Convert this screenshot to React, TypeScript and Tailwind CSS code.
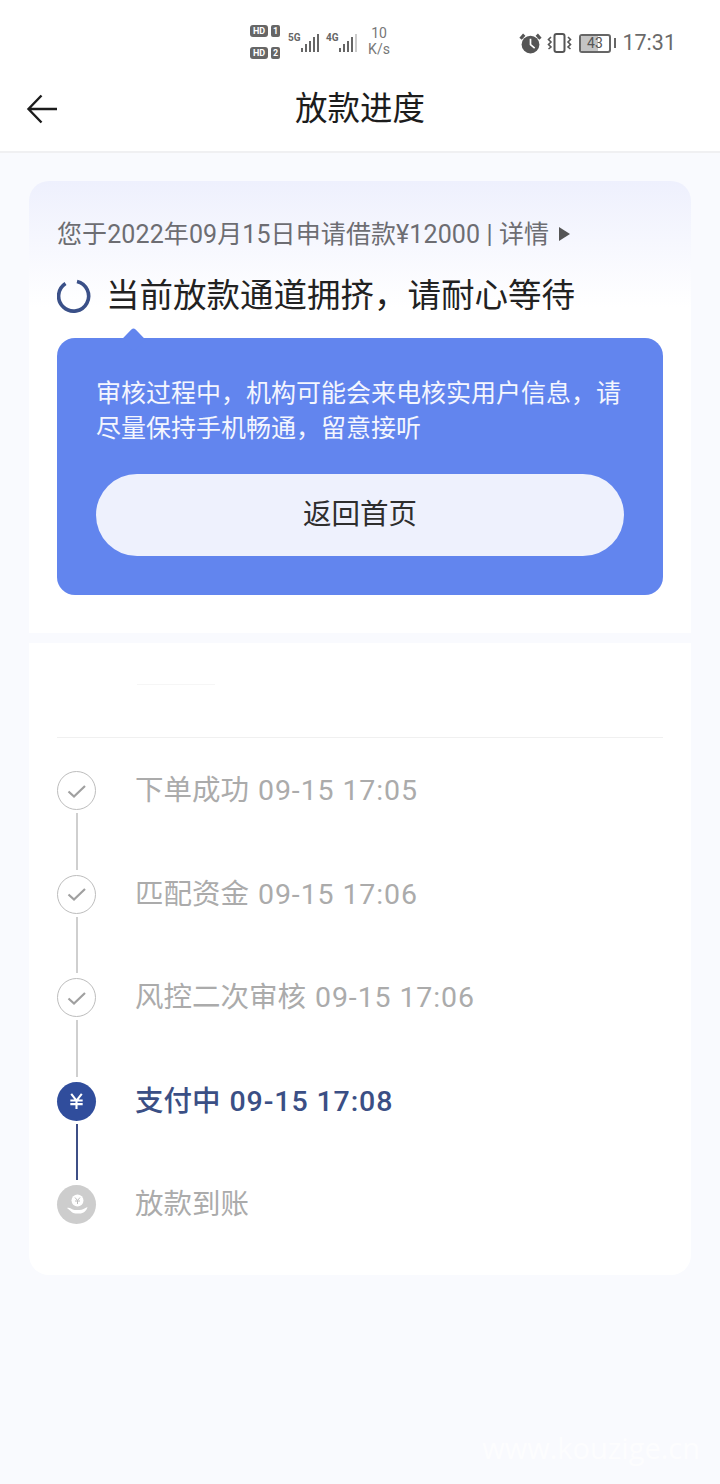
import React from 'react'

const font = { fontFamily: 'Roboto, "Noto Sans CJK SC", sans-serif' }

function StatusBar() {
    return (
        <div className="h-[76px] bg-white flex items-start text-[#5f5f5f]">
            <div className="ml-[250px] mt-[25px] flex items-start">
                <div className="flex flex-col gap-[10px] w-[30px]">
                    <SimTag n="1" />
                    <SimTag n="2" />
                </div>
                <Signal label="5G" className="ml-[8px]" dim={false} />
                <Signal label="4G" className="ml-[7px]" dim />
                <div className="ml-[11px] w-[22px] text-[14px] leading-[16px] text-center text-[#777]">10<br />K/s</div>
            </div>
            <div className="ml-auto mr-[44px] mt-[31px] flex items-center">
                <svg width="23" height="23" viewBox="0 0 22 22" className="mr-[5px]">
                    <circle cx="11" cy="12" r="8.500" fill="#555" />
                    <path d="M11 6.500V12l4 3.500" stroke="#fff" strokeWidth="1.600" fill="none" />
                    <path d="M1.500 6.500 5 2.500M20.500 6.500 17 2.500" stroke="#555" strokeWidth="3" />
                </svg>
                <svg width="25" height="24" viewBox="0 0 25 24" className="mr-[7px]" fill="none" stroke="#555">
                    <rect x="7.500" y="3" width="10" height="18" rx="2" strokeWidth="2" />
                    <path d="M4 6 1.500 8.500 4 11l-2.500 2.500L4 16l-2.500 2M21 6l2.500 2.500L21 11l2.500 2.500L21 16l2.500 2" strokeWidth="1.600" />
                </svg>
                <div className="relative w-[32px] h-[19px] rounded-[3px] border-2 border-[#666] overflow-hidden">
                    <div className="h-full w-[60%] bg-[#c4c4c4]" />
                    <div className="absolute inset-0 flex items-center justify-center text-[14px] leading-none text-[#555]">43</div>
                </div>
                <div className="ml-[3px] w-[2.500px] h-[10px] bg-[#666]" />
                <div className="ml-[6px] text-[21.500px] leading-none text-[#6a6a6a]">17:31</div>
            </div>
        </div>
    )
}

function SimTag({ n }: { n: string }) {
    return (
        <div className="flex items-center gap-[3px]">
            <div className="w-[18px] h-[12px] rounded-[3px] bg-[#666] text-white text-[9px] leading-[12px] font-bold text-center">HD</div>
            <div className="w-[9px] h-[12px] rounded-[2px] bg-[#666] text-white text-[9px] leading-[12px] font-bold text-center">{n}</div>
        </div>
    )
}

function Signal({ label, className, dim }: { label: string; className: string; dim: boolean }) {
    const bars = [4, 8, 11, 15, 18]
    return (
        <div className={`relative w-[31px] h-[27px] ${className}`}>
            <div className="absolute left-0 top-[7px] text-[10px] leading-[11px] font-bold text-[#666]">{label}</div>
            <div className="absolute right-0 bottom-0 flex items-end gap-[1.500px]">
                {bars.map((h, i) => (
                    <div key={i} className={dim && i === 4 ? 'w-[2.500px] bg-[#ccc]' : 'w-[2.500px] bg-[#666]'} style={{ height: h }} />
                ))}
            </div>
        </div>
    )
}

function Check() {
    return (
        <div className="w-[39px] h-[39px] rounded-full border-[1.500px] border-[#bdbdbd] bg-white flex items-center justify-center">
            <svg width="20" height="16" viewBox="0 0 20 16" fill="none" stroke="#a0a0a0" strokeWidth="2.200">
                <path d="M1.500 8.500 7 13.500 18 3" />
            </svg>
        </div>
    )
}

function Yuan() {
    return (
        <div className="w-[39px] h-[39px] rounded-full bg-[#304d9c] flex items-center justify-center">
            <svg width="15" height="16" viewBox="0 0 17 18" fill="none" stroke="#fff" strokeWidth="2.400">
                <path d="M2.500 1 8.500 8.500 14.500 1M1.500 8.500h14M1.500 12.500h14M8.500 8.500V18" />
            </svg>
        </div>
    )
}

function Payout() {
    return (
        <div className="w-[39px] h-[39px] rounded-full bg-[#cdcdcd] flex items-center justify-center">
            <svg width="26" height="26" viewBox="0 0 26 26" fill="none">
                <circle cx="13.500" cy="8.500" r="6" fill="#fff" />
                <path d="M11 5.500 13.500 8.500 16 5.500M11 9h5M13.500 8.500V12" stroke="#bdbdbd" strokeWidth="1" />
                <path d="M3 16c3-1 4.500 1.500 7.500 2h5c3 0 5-2 8-3-1 4-4 6.500-8 6.500h-4c-3 0-5-3-8.500-5.500z" fill="#fff" />
            </svg>
        </div>
    )
}

function Step({ icon, label, time, line, active, last }: { icon: React.ReactNode; label: string; time?: string; line?: string; active?: boolean; last?: boolean }) {
    return (
        <div className={last ? 'flex' : 'flex h-[103.500px]'}>
            <div className="w-[39px] flex flex-col items-center">
                {icon}
                {!last && <div className={`flex-1 mt-[3px] mb-[5px] ${line}`} />}
            </div>
            <div className={active ? 'ml-[39px] h-[39px] leading-[39px] text-[28.500px] font-medium text-[#3b4f85]' : 'ml-[39px] h-[39px] leading-[39px] text-[28.500px] text-[#ababab]'}>
                {label}
                {time && <span className="ml-[9px] tracking-[0.900px]">{time}</span>}
            </div>
        </div>
    )
}

export default function App() {
    return (
        <div className="relative w-[720px] h-[1484px] bg-[#f9fafe] overflow-hidden" style={font}>
            <StatusBar />
            <div className="h-[77px] pb-[8px] bg-white border-b-2 border-[#f0f0f2] relative flex items-center justify-center">
                <svg className="absolute left-[26px] top-[18px]" width="33" height="30" viewBox="0 0 33 30" fill="none" stroke="#1c1c1c" strokeWidth="2.400">
                    <path d="M31 15H3M15.500 1.500 2.500 15 15.500 28.500" />
                </svg>
                <div className="text-[32.500px] leading-none text-[#1c1c1c]">放款进度</div>
            </div>

            <div className="px-[29px] pt-[28px]">
                <div className="h-[452px] rounded-t-[20px] bg-gradient-to-b from-[#eef0fd] to-white to-[28%] px-[28px] pt-[36px]">
                    <div className="h-[34px] flex items-center text-[25px] leading-none tracking-[0.100px] text-[#6d6d72]">
                        您于2022年09月15日申请借款¥12000 | 详情
                        <span className="ml-[10px] w-0 h-0 border-y-[7px] border-y-transparent border-l-[11px] border-l-[#555]" />
                    </div>
                    <div className="mt-[23px] h-[44px] flex items-center">
                        <svg width="34" height="34" viewBox="0 0 34 34" className="shrink-0" fill="none">
                            <path d="M20 2.500A15 15 0 1 1 8.500 4.500" stroke="#3a5088" strokeWidth="3.600" />
                        </svg>
                        <div className="ml-[15px] text-[33.500px] leading-none text-[#222]">{'当前放款通道拥挤\uFF0C请耐心等待'}</div>
                    </div>
                    <div className="relative mt-[20px] h-[257px] rounded-[18px] bg-[#6285ee] px-[39px] pt-[38px]">
                        <div className="absolute -top-[7px] left-[68px] w-[17px] h-[17px] rotate-45 rounded-[3px] bg-[#6285ee]" />
                        <div className="relative text-[25px] leading-[35px] text-[#f4f6fe]">{'审核过程中\uFF0C机构可能会来电核实用户信息\uFF0C请尽量保持手机畅通\uFF0C留意接听'}</div>
                        <div className="mt-[28px] h-[82px] rounded-full bg-[#eef1fd] flex items-center justify-center text-[28.500px] text-[#2e2e2e]">返回首页</div>
                    </div>
                </div>

                <div className="mt-[10px] h-[632px] rounded-b-[20px] bg-white px-[28px]">
                    <div className="h-[95px] border-b border-[#f0f0f0] pt-[41px] pl-[80px]">
                        <div className="w-[78px] h-px bg-[#f6f6f6]" />
                    </div>
                    <div className="pt-[33px]">
                        <Step icon={<Check />} label="下单成功" time="09-15 17:05" line="w-[2px] bg-[#cfcfcf]" />
                        <Step icon={<Check />} label="匹配资金" time="09-15 17:06" line="w-[2px] bg-[#cfcfcf]" />
                        <Step icon={<Check />} label="风控二次审核" time="09-15 17:06" line="w-[2px] bg-[#cfcfcf]" />
                        <Step icon={<Yuan />} label="支付中" time="09-15 17:08" line="w-[2px] bg-[#3e4f86]" active />
                        <Step icon={<Payout />} label="放款到账" last />
                    </div>
                </div>
            </div>
            <div className="absolute right-[20px] bottom-[22px] text-[29px] leading-none text-white/70" style={{ fontFamily: '"Open Sans", sans-serif' }}>www.kouzige.cn</div>
        </div>
    )
}
